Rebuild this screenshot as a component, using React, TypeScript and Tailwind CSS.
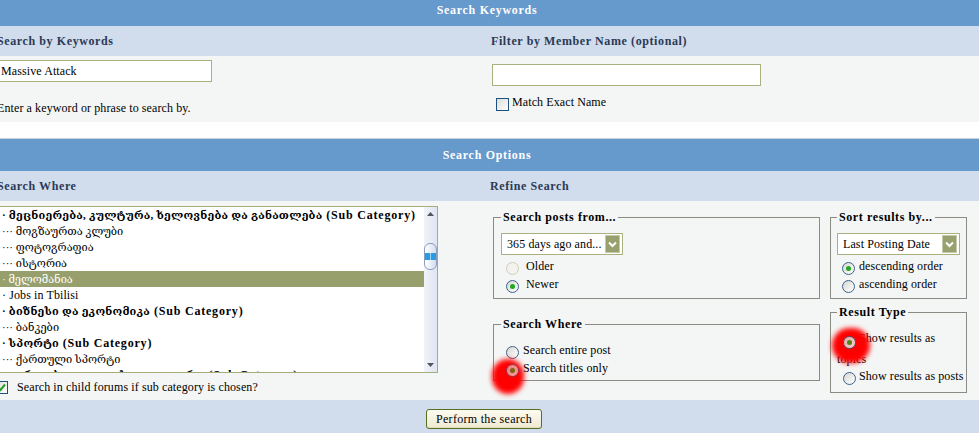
import React from 'react';

type Forum = { name: string; cat?: boolean; sub?: boolean; selected?: boolean; latin?: boolean };

const forums: Forum[] = [
  { name: 'მეცნიერება, კულტურა, ხელოვნება და განათლება', cat: true },
  { name: 'მოგზაურთა კლუბი', sub: true },
  { name: 'ფოტოგრაფია', sub: true },
  { name: 'ისტორია', sub: true },
  { name: 'მელომანია', selected: true },
  { name: 'Jobs in Tbilisi', latin: true },
  { name: 'ბიზნესი და ეკონომიკა', cat: true },
  { name: 'ბანკები', sub: true },
  { name: 'სპორტი', cat: true },
  { name: 'ქართული სპორტი', sub: true },
  { name: 'გართობა და თავისუფალი დრო', cat: true },
];

function Radio({ checked = false, disabled = false }: { checked?: boolean; disabled?: boolean }) {
  return (
    <span
      className={`inline-flex items-center justify-center w-[13px] h-[13px] rounded-full border shrink-0 ${
        disabled
          ? 'border-[#cfcdc2] bg-[#f3f2ed]'
          : 'border-[#3a6191] bg-linear-to-br from-[#d8d8d0] to-white'
      }`}
    >
      {checked && <span className="w-[5px] h-[5px] rounded-full bg-[#22a722]" />}
    </span>
  );
}

function Checkbox({ checked = false }: { checked?: boolean }) {
  return (
    <span className="inline-flex items-center justify-center w-[13px] h-[13px] border border-[#1c5180] bg-linear-to-br from-[#dcdcd7] to-white shrink-0">
      {checked && (
        <svg width="9" height="9" viewBox="0 0 9 9">
          <path d="M1 4.5 L3.5 7 L8 1.5" fill="none" stroke="#21a121" strokeWidth="2" />
        </svg>
      )}
    </span>
  );
}

function Dropdown({ value, width }: { value: string; width: string }) {
  return (
    <div className={`${width} h-[22px] border border-[#a9b17f] bg-white flex items-center pl-[5px] pr-[2px]`}>
      <span className="flex-1 whitespace-nowrap overflow-hidden">{value}</span>
      <span className="w-[15px] h-[18px] bg-[#98a16e] border border-[#c5cba8] flex items-center justify-center">
        <svg width="9" height="7" viewBox="0 0 9 7">
          <path d="M1 1.5 L4.5 5 L8 1.5" fill="none" stroke="#fff" strokeWidth="2" />
        </svg>
      </span>
    </div>
  );
}

function Box({ title, className, children }: { title: string; className: string; children: React.ReactNode }) {
  return (
    <fieldset className={`border border-[#8b8b84] ${className}`}>
      <legend className="px-[2px] font-bold tracking-[0.6px] leading-[14px]">{title}</legend>
      {children}
    </fieldset>
  );
}

function Option({
  checked,
  disabled,
  label,
  gap = 'ml-[6px]',
  dim,
}: {
  checked?: boolean;
  disabled?: boolean;
  label: string;
  gap?: string;
  dim?: boolean;
}) {
  return (
    <div className="h-[18px] flex items-center whitespace-nowrap">
      <span className={`ml-[5px] mt-[5px] flex ${dim ? 'relative z-20 opacity-60' : ''}`}>
        <Radio checked={checked} disabled={disabled} />
      </span>
      <span className={gap}>{label}</span>
    </div>
  );
}

function ForumList() {
  return (
    <div className="w-[441px] h-[167px] border border-[#a5ad7e] bg-white flex overflow-hidden">
      <div className="flex-1 overflow-hidden">
        {forums.map((f) => (
          <div
            key={f.name}
            className={`h-[16px] leading-[16px] whitespace-nowrap pl-[4px] ${
              f.selected ? 'bg-[#97a06c] text-white' : ''
            }`}
          >
            <span
              className={
                f.latin ? '' : f.cat ? 'text-[11px] font-bold tracking-[0.2px]' : 'text-[11px] tracking-[0px]'
              }
            >
              {f.sub ? '··· ' : '· '}
              {f.name}
            </span>
            {f.cat && <span className="font-bold tracking-[0.8px]"> (Sub Category)</span>}
          </div>
        ))}
      </div>
      {/* scrollbar */}
      <div className="w-[13px] flex flex-col bg-linear-to-r from-[#f1f3f9] to-[#dfe5f1]">
        <div className="h-[14px] flex items-center justify-center">
          <svg width="7" height="4" viewBox="0 0 7 4">
            <path d="M0 4 L3.5 0 L7 4 Z" fill="#4d5563" />
          </svg>
        </div>
        <div className="flex-1">
          <div className="mt-[22px] h-[27px] rounded-[6px] border border-[#8c9cbd] bg-linear-to-r from-white to-[#d5ddee] flex items-center">
            <div className="w-full h-[7px] flex gap-[1px] bg-[#9fd4f4]">
              <span className="flex-1 bg-[#2a9be0]" />
              <span className="flex-1 bg-[#2a9be0]" />
            </div>
          </div>
        </div>
        <div className="h-[14px] flex items-center justify-center">
          <svg width="7" height="4" viewBox="0 0 7 4">
            <path d="M0 0 L3.5 4 L7 0 Z" fill="#4d5563" />
          </svg>
        </div>
      </div>
    </div>
  );
}

function Mark({ className }: { className: string }) {
  return <div className={`absolute rounded-full bg-[#ff0000] blur-[2.5px] z-10 pointer-events-none ${className}`} />;
}

export default function App() {
  return (
    <div className="w-[979px] h-[433px] overflow-hidden bg-white text-black text-[12px] tracking-[0.1px] font-['Liberation_Serif','DejaVu_Serif',serif]">
      <div className="w-[992px] -ml-[9px]">
        {/* Search Keywords */}
        <div className="h-[26px] pb-[6px] bg-[#6699cc] flex items-center justify-center text-white font-bold tracking-[0.7px]">
          Search Keywords
        </div>
        <div className="h-[30px] bg-[#d1dcec] grid grid-cols-[494px_1fr] font-bold tracking-[0.6px] text-[#2b3a55]">
          <div className="px-[6px] flex items-center">Search by Keywords</div>
          <div className="px-[6px] flex items-center">Filter by Member Name (optional)</div>
        </div>
        <div className="h-[66px] bg-[#f4f6f5] grid grid-cols-[494px_1fr]">
          <div className="px-[6px] pt-[4px]">
            <div className="w-[215px] h-[22px] border border-[#a9b17f] bg-white px-[3px] flex items-center">Massive Attack</div>
            <div className="mt-[18px] leading-[16px]">Enter a keyword or phrase to search by.</div>
          </div>
          <div className="pl-[7px] pt-[8px]">
            <div className="w-[269px] h-[22px] border border-[#a9b17f] bg-white" />
            <div className="mt-[11px] ml-[4px] flex items-center">
              <Checkbox />
              <span className="ml-[3px] -mt-[4px]">Match Exact Name</span>
            </div>
          </div>
        </div>

        {/* Search Options */}
        <div className="mt-[16px] h-[33px] bg-[#6699cc] border-t border-[#c9d2df] flex items-center justify-center text-white font-bold tracking-[0.7px]">
          Search Options
        </div>
        <div className="h-[30px] bg-[#d1dcec] grid grid-cols-[494px_1fr] font-bold tracking-[0.6px] text-[#2b3a55]">
          <div className="px-[6px] flex items-center">Search Where</div>
          <div className="px-[5px] flex items-center">Refine Search</div>
        </div>
        <div className="h-[199px] bg-[#f4f6f5] grid grid-cols-[494px_1fr]">
          <div className="px-[6px] pt-[5px]">
            <ForumList />
            <div className="mt-[5px] -ml-[2px] flex items-center">
              <Checkbox checked />
              <span className="ml-[9px]">Search in child forums if sub category is chosen?</span>
            </div>
          </div>
          <div className="pl-[8px] pt-[9px] grid grid-cols-[327px_137px] grid-rows-[auto_auto] gap-x-[10px] gap-y-[6px] items-center content-start">
            <Box title="Search posts from..." className="pl-[7px] pr-[6px] pb-[5px] self-start">
              <div className="mt-[9px]">
                <Dropdown value="365 days ago and..." width="w-[122px]" />
              </div>
              <div className="mt-[2px]">
                <Option disabled label="Older" gap="ml-[7px]" />
                <Option checked label="Newer" gap="ml-[7px]" />
              </div>
            </Box>
            <Box title="Sort results by..." className="pl-[6px] pr-[6px] pb-[5px] self-start">
              <div className="mt-[9px]">
                <Dropdown value="Last Posting Date" width="w-[123px]" />
              </div>
              <div className="mt-[2px]">
                <Option checked label="descending order" gap="ml-[4px]" />
                <Option label="ascending order" gap="ml-[4px]" />
              </div>
            </Box>
            <Box title="Search Where" className="relative pl-[7px] pr-[6px] pb-[3px]">
              <Mark className="left-[-2px] top-[28px] w-[32px] h-[35px]" />
              <div className="mt-[10px]">
                <Option label="Search entire post" gap="ml-[4px]" />
                <Option checked dim label="Search titles only" gap="ml-[4px]" />
              </div>
            </Box>
            <Box title="Result Type" className="relative pl-[6px] pr-[2px] pb-[7px]">
              <Mark className="left-[1px] top-[9px] w-[38px] h-[35px]" />
              <div className="mt-[9px] leading-[20px]">
                <span className="relative z-20 inline-flex ml-[6px] mr-[3px] align-[-3px] opacity-80">
                  <Radio checked />
                </span>
                Show results as topics
              </div>
              <div className="-mt-[2px] h-[18px] flex items-center whitespace-nowrap">
                <span className="ml-[6px] mt-[5px] flex">
                  <Radio />
                </span>
                <span className="ml-[3px]">Show results as posts</span>
              </div>
            </Box>
          </div>
        </div>
        <div className="h-[40px] bg-[#d1dcec] pt-[9px] flex justify-center pr-[6px]">
          <button className="w-[116px] h-[20px] rounded-[3px] border border-[#56701f] bg-linear-to-b from-[#fdfbf1] to-[#efe9d0] text-[12px] leading-none tracking-[0.3px] shadow-[inset_0_-1px_0_#e2dbbd]">
            Perform the search
          </button>
        </div>
      </div>
    </div>
  );
}
